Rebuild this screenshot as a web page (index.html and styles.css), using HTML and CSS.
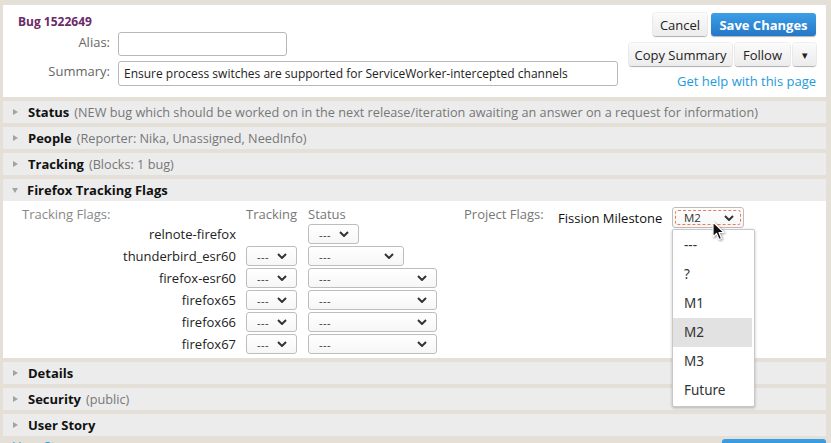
FILE: index.html
```html
<!DOCTYPE html>
<html lang="en">
<head>
<meta charset="utf-8">
<title>Bug 1522649</title>
<link rel="stylesheet" href="styles.css">
</head>
<body>
<div class="page">
  <header class="bug-header">
    <div class="head-left">
      <div class="bug-id">Bug 1522649</div>
      <div class="field-row">
        <span class="field-label">Alias:</span>
        <span class="text-input alias"></span>
      </div>
      <div class="field-row summary-row">
        <span class="field-label">Summary:</span>
        <span class="text-input summary">Ensure process switches are supported for ServiceWorker-intercepted channels</span>
      </div>
    </div>
    <div class="head-right">
      <div class="btn-row">
        <button class="btn btn-cancel">Cancel</button>
        <button class="btn btn-primary">Save Changes</button>
      </div>
      <div class="btn-row btn-row-2">
        <button class="btn btn-copy">Copy Summary</button>
        <button class="btn btn-follow">Follow</button>
        <button class="btn btn-more">&#9662;</button>
      </div>
      <a class="help-link" href="#">Get help with this page</a>
    </div>
  </header>

  <div class="bar"><span class="tri"></span><span class="bar-title">Status</span><span class="bar-desc">(NEW bug which should be worked on in the next release/iteration awaiting an answer on a request for information)</span></div>
  <div class="bar"><span class="tri"></span><span class="bar-title">People</span><span class="bar-desc">(Reporter: Nika, Unassigned, NeedInfo)</span></div>
  <div class="bar"><span class="tri"></span><span class="bar-title">Tracking</span><span class="bar-desc">(Blocks: 1 bug)</span></div>
  <div class="bar bar-open"><span class="tri tri-down"></span><span class="bar-title">Firefox Tracking Flags</span></div>

  <div class="flags-panel">
    <div class="tracking-grid">
      <div class="grid-head head-label">Tracking Flags:</div>
      <div class="grid-head">Tracking</div>
      <div class="grid-head">Status</div>

      <div class="flag-name">relnote-firefox</div>
      <div class="cell"></div>
      <div class="cell"><span class="select sel-xs">---<svg class="chev" viewBox="0 0 10 6"><path d="M1 1 L5 5 L9 1"/></svg></span></div>

      <div class="flag-name">thunderbird_esr60</div>
      <div class="cell"><span class="select sel-track">---<svg class="chev" viewBox="0 0 10 6"><path d="M1 1 L5 5 L9 1"/></svg></span></div>
      <div class="cell"><span class="select sel-mid">---<svg class="chev" viewBox="0 0 10 6"><path d="M1 1 L5 5 L9 1"/></svg></span></div>

      <div class="flag-name">firefox-esr60</div>
      <div class="cell"><span class="select sel-track">---<svg class="chev" viewBox="0 0 10 6"><path d="M1 1 L5 5 L9 1"/></svg></span></div>
      <div class="cell"><span class="select sel-wide">---<svg class="chev" viewBox="0 0 10 6"><path d="M1 1 L5 5 L9 1"/></svg></span></div>

      <div class="flag-name">firefox65</div>
      <div class="cell"><span class="select sel-track">---<svg class="chev" viewBox="0 0 10 6"><path d="M1 1 L5 5 L9 1"/></svg></span></div>
      <div class="cell"><span class="select sel-wide">---<svg class="chev" viewBox="0 0 10 6"><path d="M1 1 L5 5 L9 1"/></svg></span></div>

      <div class="flag-name">firefox66</div>
      <div class="cell"><span class="select sel-track">---<svg class="chev" viewBox="0 0 10 6"><path d="M1 1 L5 5 L9 1"/></svg></span></div>
      <div class="cell"><span class="select sel-wide">---<svg class="chev" viewBox="0 0 10 6"><path d="M1 1 L5 5 L9 1"/></svg></span></div>

      <div class="flag-name">firefox67</div>
      <div class="cell"><span class="select sel-track">---<svg class="chev" viewBox="0 0 10 6"><path d="M1 1 L5 5 L9 1"/></svg></span></div>
      <div class="cell"><span class="select sel-wide">---<svg class="chev" viewBox="0 0 10 6"><path d="M1 1 L5 5 L9 1"/></svg></span></div>
    </div>

    <div class="project-flags">
      <div class="project-label">Project Flags:</div>
      <div class="project-name">Fission Milestone</div>
      <div class="fission-wrap">
        <span class="select sel-fission"><span class="focus-ring"></span>M2<svg class="chev" viewBox="0 0 10 6"><path d="M1 1 L5 5 L9 1"/></svg></span>
        <ul class="dropdown">
          <li>---</li>
          <li>?</li>
          <li>M1</li>
          <li class="hover">M2</li>
          <li>M3</li>
          <li>Future</li>
        </ul>
        <svg class="cursor" viewBox="0 0 13 20" width="13" height="20"><path d="M1 1 L1 16 L4.5 12.5 L7 18.5 L9.5 17.5 L7 11.5 L12 11.5 Z" fill="#111" stroke="#fff" stroke-width="1.2" stroke-linejoin="round"/></svg>
      </div>
    </div>
  </div>

  <div class="bar bar-gap"><span class="tri"></span><span class="bar-title">Details</span></div>
  <div class="bar"><span class="tri"></span><span class="bar-title">Security</span><span class="bar-desc">(public)</span></div>
  <div class="bar"><span class="tri"></span><span class="bar-title">User Story</span></div>

  <div class="footer-row">
    <a class="footer-link" href="#">User Story</a>
    <button class="btn btn-primary btn-footer">Save Changes</button>
  </div>
</div>
</body>
</html>
```

FILE: styles.css
```css
* { box-sizing: border-box; }

html, body {
  margin: 0;
  padding: 0;
}

body {
  width: 831px;
  height: 443px;
  overflow: hidden;
  background: #e4e0d8;
  font-family: "Open Sans", "Noto Sans", sans-serif;
  font-size: 12.5px;
  color: #111;
}

.page {
  padding: 5px 5px 0 3px;
}

/* ---------- header ---------- */
.bug-header {
  background: #fff;
  height: 92px;
  display: flex;
  justify-content: space-between;
  padding: 8px 10px 0 15px;
}

.bug-id {
  color: #6b2a68;
  font-weight: 700;
  font-size: 12px;
  line-height: 17px;
  margin-bottom: 2px;
}

.field-row {
  display: flex;
  align-items: flex-start;
  gap: 8px;
  height: 24px;
}

.summary-row {
  margin-top: 5px;
  height: 25px;
}

.field-label {
  width: 92px;
  text-align: right;
  color: #666;
  font-size: 13px;
  line-height: 18px;
  margin-top: 1px;
}

.text-input {
  display: flex;
  align-items: center;
  height: 100%;
  border: 1px solid #b8b8b8;
  border-radius: 3px;
  background: #fff;
  padding: 0 5px;
  font-size: 12px;
  color: #222;
  white-space: nowrap;
}

.alias { width: 169px; }
.summary { width: 500px; }

.head-right {
  display: flex;
  flex-direction: column;
  align-items: flex-end;
}

.btn-row {
  display: flex;
  gap: 4px;
}

.btn-row-2 {
  margin-top: 7px;
  gap: 3px;
}

.btn {
  height: 23px;
  border: 0;
  border-radius: 3px;
  padding: 0;
  font-family: inherit;
  font-size: 13px;
  color: #222;
  background: linear-gradient(#fbfbfb, #ececec);
  box-shadow: 0 0 0 1px rgba(0, 0, 0, 0.06), 0 1px 1px rgba(0, 0, 0, 0.28);
  text-align: center;
}

.btn-primary {
  color: #fff;
  font-weight: 700;
  background: linear-gradient(#3c9fe6, #2577c6);
  box-shadow: 0 1px 1px rgba(0, 0, 0, 0.3);
}

.btn-cancel { width: 54px; }
.btn-row .btn-primary { width: 105px; }
.btn-copy { width: 103px; }
.btn-follow { width: 55px; }
.btn-more { width: 23px; font-size: 11px; }

.help-link {
  margin-top: 6px;
  color: #1b9bdc;
  text-decoration: none;
  font-size: 13px;
  line-height: 18px;
}

/* ---------- section bars ---------- */
.bar {
  margin-top: 4px;
  height: 22px;
  background: #ececec;
  display: flex;
  align-items: center;
  padding-left: 10px;
  white-space: nowrap;
  overflow: hidden;
}

.tri {
  width: 0;
  height: 0;
  border-left: 5px solid #a3a3a3;
  border-top: 3.5px solid transparent;
  border-bottom: 3.5px solid transparent;
  margin-right: 10px;
}

.tri-down {
  border-left: 3.5px solid transparent;
  border-right: 3.5px solid transparent;
  border-top: 5px solid #a3a3a3;
  border-bottom: 0;
  margin-left: -1px;
  margin-right: 9px;
}

.bar-title {
  font-weight: 700;
  font-size: 13px;
  color: #111;
}

.bar-desc {
  margin-left: 5px;
  color: #777;
  font-size: 12.7px;
}

.bar-gap { margin-top: 4px; }

/* ---------- flags panel ---------- */
.flags-panel {
  background: #fff;
  height: 157px;
  display: flex;
  padding: 5px 0 0 19px;
  position: relative;
}

.tracking-grid {
  display: grid;
  grid-template-columns: 224px 62px 129px;
  grid-template-rows: 17px repeat(6, 22px);
  align-items: center;
}

.grid-head {
  color: #777;
  font-size: 13px;
  line-height: 17px;
}

.head-label { color: #888; }

.flag-name {
  text-align: right;
  padding-right: 10px;
  font-size: 13px;
  color: #222;
}

.cell {
  display: flex;
  align-items: center;
}

.select {
  position: relative;
  display: flex;
  align-items: center;
  justify-content: space-between;
  height: 20px;
  border: 1px solid #bdbdbd;
  border-radius: 3px;
  background: linear-gradient(#fff, #f6f6f6);
  padding: 0 9px 0 10px;
  font-size: 11px;
  color: #333;
  letter-spacing: 0.5px;
}

.chev {
  width: 10px;
  height: 6px;
  fill: none;
  stroke: #333;
  stroke-width: 2;
}

.sel-xs { width: 51px; }
.sel-track { width: 51px; }
.sel-mid { width: 96px; }
.sel-wide { width: 129px; }

/* ---------- project flags ---------- */
.project-flags {
  display: flex;
  align-items: flex-start;
  margin-left: 27px;
}

.project-label {
  width: 94px;
  color: #777;
  font-size: 13px;
  line-height: 17px;
}

.project-name {
  font-size: 13px;
  color: #111;
  margin-top: 3px;
  width: 114px;
}

.fission-wrap {
  position: relative;
  margin-top: 1px;
}

.sel-fission {
  width: 72px;
  height: 21px;
  padding: 0 9px 0 11px;
  font-size: 11.5px;
  letter-spacing: 0;
}

.focus-ring {
  position: absolute;
  inset: 2px;
  border: 1px dashed #ec7a52;
  border-radius: 3px;
}

.dropdown {
  position: absolute;
  left: 0;
  top: 22px;
  width: 83px;
  margin: 0;
  padding: 1px 0;
  list-style: none;
  background: #fff;
  border: 1px solid #c8c8c8;
  border-radius: 2px;
  box-shadow: 0 1px 3px rgba(0, 0, 0, 0.25);
  font-family: "Noto Sans", sans-serif;
  font-size: 13.5px;
  color: #333;
  z-index: 5;
}

.dropdown li {
  height: 29px;
  line-height: 29px;
  padding-left: 11px;
}

.dropdown li.hover {
  background: #e2e2e2;
  margin-right: 2px;
}

.cursor {
  position: absolute;
  left: 40px;
  top: 14px;
  z-index: 6;
  filter: drop-shadow(1px 1px 1px rgba(0, 0, 0, 0.4));
}

/* ---------- footer ---------- */
.footer-row {
  margin-top: 3px;
  display: flex;
  justify-content: space-between;
  align-items: flex-start;
  padding-left: 9px;
}

.footer-link {
  color: #1b9bdc;
  text-decoration: none;
  font-size: 13px;
  line-height: 13px;
  margin-top: 1px;
}

.btn-footer {
  width: 104px;
  margin-top: 0;
}
```
